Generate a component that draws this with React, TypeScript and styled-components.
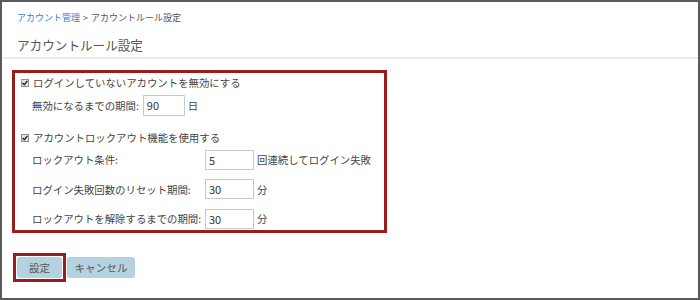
import React from "react";
import styled, { createGlobalStyle } from "styled-components";

const GlobalStyle = createGlobalStyle`
  html, body {
    margin: 0;
    padding: 0;
    background: #5b5b5b;
  }
  body {
    font-family: "Noto Sans CJK JP", "Noto Sans", sans-serif;
    color: #444;
  }
`;

const Frame = styled.div`
  width: 700px;
  height: 300px;
  box-sizing: border-box;
  border: 2px solid #5b5b5b;
  background: #fff;
  overflow: hidden;
`;

const Header = styled.div`
  padding: 9px 15px 0;
`;

const Breadcrumb = styled.div`
  font-size: 9px;
  line-height: 14px;
  color: #555;
  white-space: nowrap;
`;

const Crumb = styled.span`
  color: #3b7dcf;
`;

const Sep = styled.span`
  margin: 0 3px;
`;

const Title = styled.h1`
  margin: 10px 0 0;
  font-size: 12.6px;
  line-height: 20px;
  font-weight: normal;
  color: #555;
`;

const Divider = styled.div`
  height: 2px;
  margin-top: 2px;
  background: #ececec;
`;

const Content = styled.div`
  padding: 11px 0 0 10px;
`;

const Highlight = styled.div`
  width: 375px;
  height: 163px;
  box-sizing: border-box;
  border: 3px solid #9c1b1b;
  padding: 1px 0 0 6px;
`;

const CheckLine = styled.label<{ $top?: number }>`
  display: flex;
  align-items: center;
  gap: 4px;
  height: 17px;
  margin-top: ${(p) => p.$top ?? 0}px;
  font-size: 10.4px;
  color: #444;
  white-space: nowrap;
`;

const Box = styled.span`
  width: 8px;
  height: 8px;
  box-sizing: border-box;
  border: 1px solid #8f8f8f;
  background: #e4e4e4;
  display: flex;
  align-items: center;
  justify-content: center;
`;

const FieldRow = styled.div<{ $top?: number; $height: number }>`
  display: flex;
  align-items: center;
  height: ${(p) => p.$height}px;
  margin-top: ${(p) => p.$top ?? 0}px;
  padding-left: 11px;
  font-size: 10.4px;
  color: #444;
  white-space: nowrap;
`;

const Label = styled.span<{ $width?: number }>`
  width: ${(p) => (p.$width ? `${p.$width}px` : "auto")};
  margin-right: ${(p) => (p.$width ? 0 : 4)}px;
`;

const NumInput = styled.input<{ $width: number; $height: number }>`
  width: ${(p) => p.$width}px;
  height: ${(p) => p.$height}px;
  box-sizing: border-box;
  border: 1px solid #c9c9c9;
  padding: 0 0 0 3px;
  margin: 0 3px 0 0;
  font-family: "Noto Sans CJK JP", "Noto Sans", sans-serif;
  font-size: 11px;
  color: #333;
  background: #fff;
  outline: none;
`;

const LockList = styled.div`
  display: flex;
  flex-direction: column;
  gap: 8.5px;
  margin-top: 3px;
`;

const Actions = styled.div`
  display: flex;
  align-items: center;
  margin-top: 20px;
  padding-left: 1px;
`;

const Marked = styled.span`
  display: flex;
  border: 3px solid #9c1b1b;
  padding: 1px;
`;

const Button = styled.button<{ $width: number }>`
  width: ${(p) => p.$width}px;
  height: 21px;
  border: none;
  border-radius: 3px;
  background: #b5d2e0;
  color: #555;
  font-family: "Noto Sans CJK JP", "Noto Sans", sans-serif;
  font-size: 10.6px;
  padding: 0;
  margin-left: ${(p) => (p.$width > 50 ? 1 : 0)}px;
  cursor: pointer;
`;

const Check = () => (
  <Box>
    <svg width="6" height="6" viewBox="0 0 6 6">
      <path d="M0.6 3.1 L2.3 4.8 L5.4 0.9" fill="none" stroke="#222" strokeWidth="1.4" />
    </svg>
  </Box>
);

const lockRows = [
  { label: "ロックアウト条件:", value: "5", unit: "回連続してログイン失敗" },
  { label: "ログイン失敗回数のリセット期間:", value: "30", unit: "分" },
  { label: "ロックアウトを解除するまでの期間:", value: "30", unit: "分" },
];

export default function App() {
  return (
    <>
      <GlobalStyle />
      <Frame>
        <Header>
          <Breadcrumb>
            <Crumb>アカウント管理</Crumb>
            <Sep>&gt;</Sep>
            アカウントルール設定
          </Breadcrumb>
          <Title>アカウントルール設定</Title>
        </Header>
        <Divider />
        <Content>
          <Highlight>
            <CheckLine>
              <Check />
              ログインしていないアカウントを無効にする
            </CheckLine>
            <FieldRow $top={3} $height={22}>
              <Label>無効になるまでの期間:</Label>
              <NumInput $width={42} $height={21} defaultValue="90" />
              日
            </FieldRow>
            <CheckLine $top={13}>
              <Check />
              アカウントロックアウト機能を使用する
            </CheckLine>
            <LockList>
              {lockRows.map((r) => (
                <FieldRow key={r.label} $height={21}>
                  <Label $width={173}>{r.label}</Label>
                  <NumInput $width={49} $height={20} defaultValue={r.value} />
                  {r.unit}
                </FieldRow>
              ))}
            </LockList>
          </Highlight>
          <Actions>
            <Marked>
              <Button $width={45}>設定</Button>
            </Marked>
            <Button $width={68}>キャンセル</Button>
          </Actions>
        </Content>
      </Frame>
    </>
  );
}
